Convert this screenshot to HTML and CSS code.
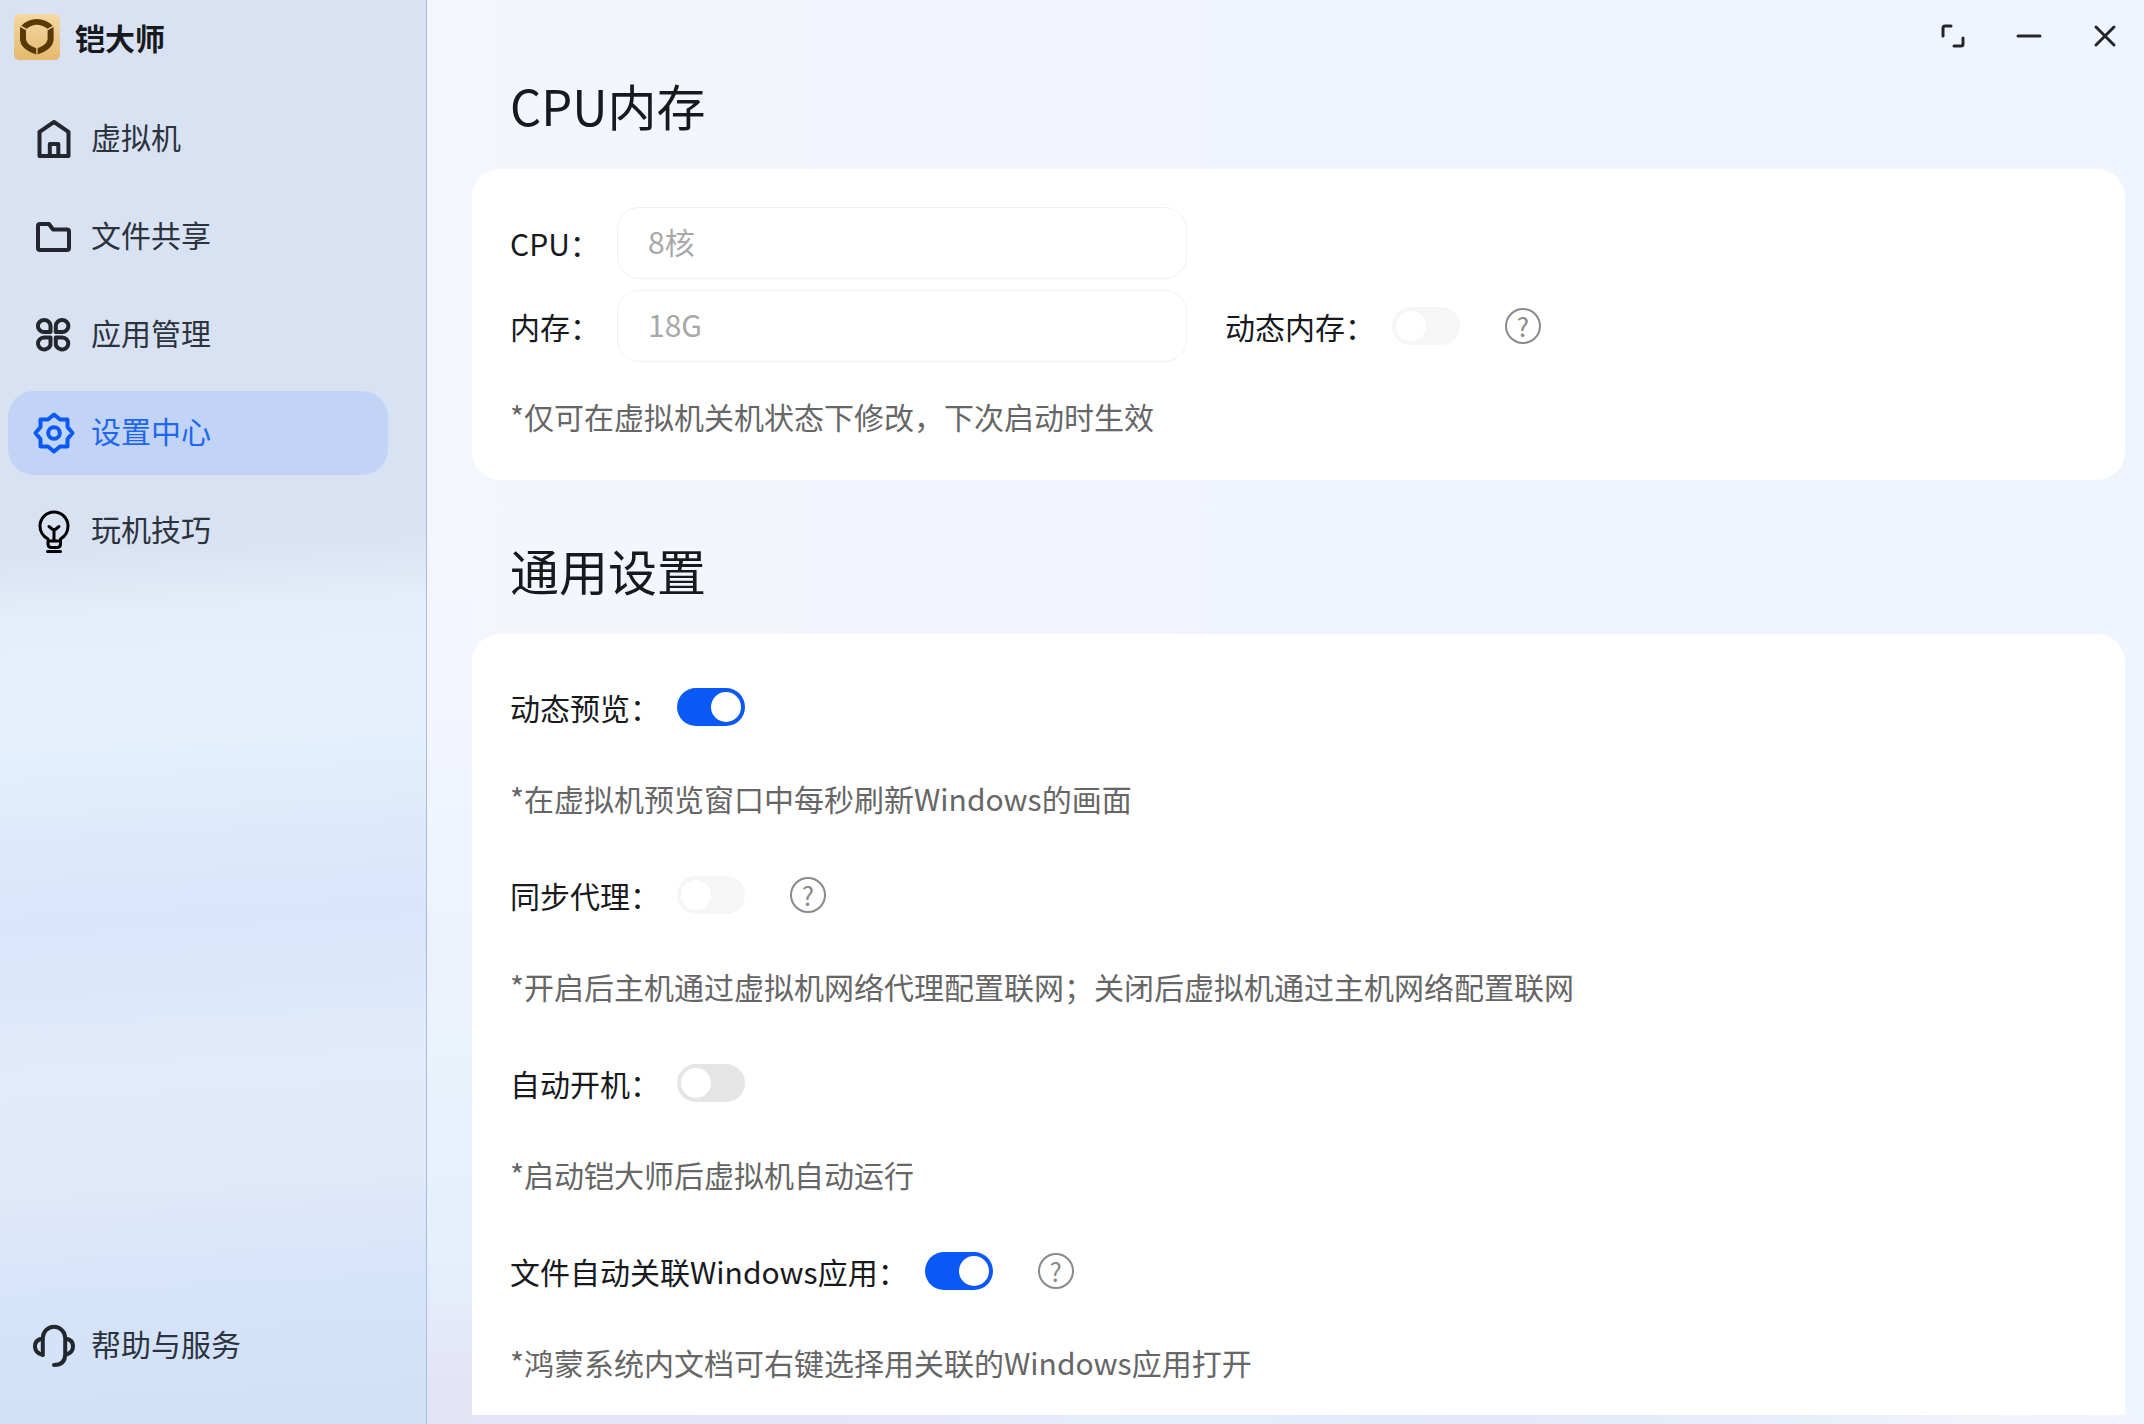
FILE: index.html
```
<!DOCTYPE html>
<html lang="zh-CN">
<head>
    <meta charset="UTF-8">
    <meta name="viewport" content="width=device-width, initial-scale=1.0">
    <title>铠大师 - 设置中心</title>
    <link rel="stylesheet" href="styles.css">
</head>
<body>

    <div class="app">
        <aside class="sidebar">
            <div class="brand">
                <svg class="brand-logo" viewBox="0 0 46 46">
                    <defs>
                        <linearGradient id="gold" x1="0" y1="0" x2="0" y2="1">
                            <stop offset="0" stop-color="#f3d9a4"/>
                            <stop offset="1" stop-color="#e6b96c"/>
                        </linearGradient>
                    </defs>
                    <rect width="46" height="46" rx="5" fill="url(#gold)"/>
                    <g fill="#593a05">
                        <path d="M7.3 11.7Q14 5 22.8 5Q32 5 38.7 11.7L33.5 14.7Q28 10.8 22.8 10.8Q18 10.8 12.5 14.7Z"/>
                        <path d="M6 13L12 16.2V25Q12.500 31 22.200 34.300V40.500Q6 35 6 25Z"/>
                        <path d="M39.600 13L33.600 16.200V25Q33 31 23.600 34.300V40.500Q39.600 35 39.600 25Z"/>
                    </g>
                </svg>
                <span class="brand-name">铠大师</span>
            </div>

            <nav class="nav">
                <a href="#" class="nav-item">
                    <svg class="nav-icon" viewBox="0 0 44 44"><path d="M7.5 39V14.8L22 5L36.5 14.8V39ZM17.8 39V27H26.3V39"/></svg>
                    <span>虚拟机</span>
                </a>
                <a href="#" class="nav-item">
                    <svg class="nav-icon" viewBox="0 0 44 44"><path d="M6 11Q6 9 8 9H17L21 14.5H35Q37 14.5 37 16.5V33Q37 35 35 35H8Q6 35 6 33Z"/></svg>
                    <span>文件共享</span>
                </a>
                <a href="#" class="nav-item">
                    <svg class="nav-icon" viewBox="0 0 44 44"><path d="M18.500 19V13A6.300 6 0 1 0 12.200 19ZM23.800 19V13A6.300 6 0 1 1 30.100 19ZM18.500 24.500V29.500A6.300 6 0 1 1 12.200 24.500ZM23.800 24.500V29.500A6.300 6 0 1 0 30.100 24.500Z"/></svg>
                    <span>应用管理</span>
                </a>
                <a href="#" class="nav-item active">
                    <svg class="nav-icon" viewBox="0 0 44 44"><path d="M22 3.5L28 8.5H35.5V16L40.5 22L35.5 28V35.5H28L22 40.5L16 35.5H8.5V28L3.5 22L8.5 16V8.5H16Z"/><circle cx="22" cy="22" r="5.8"/></svg>
                    <span>设置中心</span>
                </a>
                <a href="#" class="nav-item">
                    <svg class="nav-icon bulb" viewBox="0 0 44 44"><path d="M16 32V30Q8 25.5 8 17A14 14 0 0 1 36 17Q36 25.5 28.5 30V32M16 32H28.5V35Q28.5 38.5 25 38.5H19.5Q16 38.5 16 35ZM15.5 42.5H28.5M17 17.5L22 21.5L27 17.5M22 21.5V32"/></svg>
                    <span>玩机技巧</span>
                </a>
            </nav>

            <a href="#" class="nav-item help">
                <svg class="nav-icon" viewBox="0 0 44 44"><path d="M10.8 31V14A11.2 11.2 0 0 1 33.2 14V30Q33.2 41 22 41M10.8 14.5Q3 15.5 3 22.5Q3 29 10.8 31M33.2 14.5Q41 15.5 41 22.5Q41 29 33.2 31"/></svg>
                <span>帮助与服务</span>
            </a>
        </aside>

        <main class="main">
            <header class="window-bar">
                <button class="window-button" aria-label="最大化"><svg viewBox="0 0 40 40"><path d="M10 20V12Q10 10 12 10H18M30 22V28Q30 30 28 30H21"/></svg></button>
                <button class="window-button" aria-label="最小化"><svg viewBox="0 0 40 40"><path d="M9 20H31"/></svg></button>
                <button class="window-button" aria-label="关闭"><svg viewBox="0 0 40 40"><path d="M11 11L29 29M29 11L11 29"/></svg></button>
            </header>

            <div class="settings">
                <h2>CPU内存</h2>
                <section class="card">
                    <div class="fields">
                        <label for="cpu">CPU：</label>
                        <input type="text" id="cpu" class="field" value="8核" disabled>
                        <label for="memory">内存：</label>
                        <div class="row">
                            <input type="text" id="memory" class="field" value="18G" disabled>
                            <div class="row dynamic">
                                <label for="dynamic-memory">动态内存：</label>
                                <input type="checkbox" id="dynamic-memory" class="switch" disabled>
                                <button class="tip">?</button>
                            </div>
                        </div>
                    </div>
                    <p class="note">*仅可在虚拟机关机状态下修改，下次启动时生效</p>
                </section>

                <h2>通用设置</h2>
                <section class="card general">
                    <div class="row option">
                        <label for="preview">动态预览：</label>
                        <input type="checkbox" id="preview" class="switch" checked>
                    </div>
                    <p class="note">*在虚拟机预览窗口中每秒刷新Windows的画面</p>

                    <div class="row option">
                        <label for="proxy">同步代理：</label>
                        <input type="checkbox" id="proxy" class="switch" disabled>
                        <button class="tip">?</button>
                    </div>
                    <p class="note">*开启后主机通过虚拟机网络代理配置联网；关闭后虚拟机通过主机网络配置联网</p>

                    <div class="row option">
                        <label for="autostart">自动开机：</label>
                        <input type="checkbox" id="autostart" class="switch">
                    </div>
                    <p class="note">*启动铠大师后虚拟机自动运行</p>

                    <div class="row option">
                        <label for="associate">文件自动关联Windows应用：</label>
                        <input type="checkbox" id="associate" class="switch" checked>
                        <button class="tip">?</button>
                    </div>
                    <p class="note">*鸿蒙系统内文档可右键选择用关联的Windows应用打开</p>
                </section>
            </div>
        </main>
    </div>

</body>
</html>
```
FILE: styles.css
```
* { box-sizing: border-box; }
body { margin: 0; font-family: "Noto Sans CJK SC", sans-serif; font-size: 30px; line-height: 44px; color: #17191c; }
button, input { font: inherit; color: inherit; margin: 0; }
button { padding: 0; border: none; background: none; cursor: pointer; }

.app { display: flex; height: 100vh; }

/* Sidebar */
.sidebar { flex: none; width: 427px; display: flex; flex-direction: column; padding: 14px 38px 36px 8px; border-right: 1px solid #a9bcdc; background: linear-gradient(177deg, #d8e2f3 0%, #d8e2f2 38%, #e6edfa 43%, #e7f1fd 50%, #deeafb 58%, #d8e5fb 64%, #dce8fa 69%, #e3ebfb 75%, #e0e8f9 83%, #d6e4fa 90%, #d1e0f6 100%); }
.brand { display: flex; align-items: center; gap: 15px; height: 46px; padding-left: 6px; margin-bottom: 37px; }
.brand-logo { width: 46px; height: 46px; }
.brand-name { font-weight: 700; }
.nav { display: flex; flex-direction: column; gap: 14px; }
.nav-item { display: flex; align-items: center; gap: 15px; height: 84px; padding-left: 24px; border-radius: 26px; color: #2c333d; text-decoration: none; }
.nav-item span { padding-bottom: 6px; }
.nav-item.active { background: #c1d4f5; color: #1f67ee; }
.nav-icon { width: 44px; height: 44px; fill: none; stroke: #23272d; stroke-width: 4; stroke-linejoin: round; stroke-linecap: round; }
.nav-item.active .nav-icon { stroke: #0a59f7; }
.nav-icon.bulb { stroke: #000; stroke-width: 3; }
.help { margin-top: auto; }

/* Main area */
.main { flex: 1; min-width: 0; display: flex; flex-direction: column; padding: 0 19px 9px 45px; background: linear-gradient(90deg, #e4e4f7 0%, #e6e6f8 25%, #e4effb 45%, #e2e8f8 60%, #e8f0fa 82%, #f2f2fb 90%, #f0f4fd 100%) bottom / 100% 9px no-repeat, linear-gradient(180deg, #f4f6fd 0%, #f3f6fe 50%, #edf3fc 65%, #e5f0fb 88%, #e4e4f7 97%) left / 45px 100% no-repeat, linear-gradient(90deg, #f4f6fd 45px, #f0f4fd 50%); }
.window-bar { display: flex; justify-content: flex-end; gap: 36px; height: 60px; padding-top: 16px; }
.window-button { width: 40px; height: 40px; }
.window-button svg { display: block; fill: none; stroke: #22262c; stroke-width: 3; stroke-linecap: round; stroke-linejoin: round; }
.settings { flex: 1; min-height: 0; overflow-y: auto; scrollbar-width: none; }
h2 { margin: 60px 0 34px 38px; font-size: 49px; font-weight: 400; line-height: 60px; }
h2:first-child { margin-top: 15px; }

.card { padding: 38px 38px 14px; border-radius: 28px; background: #fff; }
.card.general { padding: 26px 38px 40px; }
.row { display: flex; align-items: center; }
.fields { display: grid; grid-template-columns: max-content 1fr; align-items: center; gap: 11px 17px; margin-bottom: 10px; }
.field { width: 570px; height: 72px; padding: 0 30px 5px; border: 1px solid #f1f1f1; border-radius: 22px; background: #fff; color: #a8a8a8; }
.dynamic { margin-left: 38px; }
.option { height: 94px; }
.note { margin: 0; padding-bottom: 6px; line-height: 88px; color: #666; }

.switch { appearance: none; position: relative; flex: none; width: 68px; height: 38px; border-radius: 19px; background: #e5e5e5; cursor: pointer; }
.row > label + .switch { margin-left: 17px; }
.switch::before { content: ""; position: absolute; top: 4px; left: 4px; width: 30px; height: 30px; border-radius: 50%; background: #fff; }
.switch:checked { background: #0a59f7; }
.switch:checked::before { left: 34px; }
.switch:disabled { background: #f6f6f6; }
.tip { width: 36px; height: 36px; margin-left: 45px; border: 2px solid #8a8a8a; border-radius: 50%; font-size: 26px; line-height: 32px; color: #8a8a8a; }
```
